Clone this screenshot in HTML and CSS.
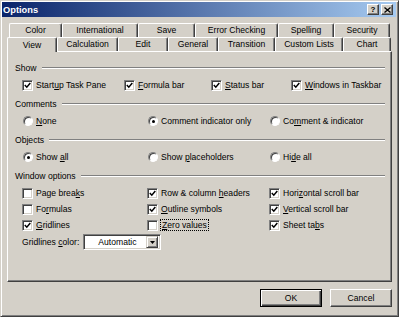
FILE: index.html
```html
<!DOCTYPE html>
<html lang="en">
<head>
  <meta charset="UTF-8">
  <title>Options</title>
  <link rel="stylesheet" href="styles.css">
</head>
<body>
  <div class="dialog">
    <div class="titlebar">
      <span class="title">Options</span>
      <span class="capbtn">?</span>
      <span class="capbtn close">
        <svg width="7" height="6" viewBox="0 0 7 6"><path d="M0.5 0.5 L6.5 5.5 M6.5 0.5 L0.5 5.5" stroke="#000" stroke-width="1.3"/></svg>
      </span>
    </div>

    <div class="content">
      <div class="tabrow back">
        <div class="tab t-color">Color</div>
        <div class="tab t-intl">International</div>
        <div class="tab t-save">Save</div>
        <div class="tab t-error">Error Checking</div>
        <div class="tab t-spell">Spelling</div>
        <div class="tab t-sec">Security</div>
      </div>
      <div class="tabrow front">
        <div class="tab t-view active">View</div>
        <div class="tab t-calc">Calculation</div>
        <div class="tab t-edit">Edit</div>
        <div class="tab t-gen">General</div>
        <div class="tab t-trans">Transition</div>
        <div class="tab t-custom">Custom Lists</div>
        <div class="tab t-chart">Chart</div>
      </div>

      <div class="panel">
        <div class="grp">Show</div>
        <div class="row show-row">
          <label class="item"><span class="cb checked"><svg width="7" height="7" viewBox="0 0 7 7"><polyline points="0.8,3 2.8,5.2 6.3,1" fill="none" stroke="#000" stroke-width="1.5"/></svg></span><span>Start<u>u</u>p Task Pane</span></label>
          <label class="item"><span class="cb checked"><svg width="7" height="7" viewBox="0 0 7 7"><polyline points="0.8,3 2.8,5.2 6.3,1" fill="none" stroke="#000" stroke-width="1.5"/></svg></span><span><u>F</u>ormula bar</span></label>
          <label class="item"><span class="cb checked"><svg width="7" height="7" viewBox="0 0 7 7"><polyline points="0.8,3 2.8,5.2 6.3,1" fill="none" stroke="#000" stroke-width="1.5"/></svg></span><span><u>S</u>tatus bar</span></label>
          <label class="item"><span class="cb checked"><svg width="7" height="7" viewBox="0 0 7 7"><polyline points="0.8,3 2.8,5.2 6.3,1" fill="none" stroke="#000" stroke-width="1.5"/></svg></span><span><u>W</u>indows in Taskbar</span></label>
        </div>

        <div class="grp">Comments</div>
        <div class="row cols3">
          <label class="item"><span class="rb"></span><span><u>N</u>one</span></label>
          <label class="item"><span class="rb on"></span><span>Comment indicator only</span></label>
          <label class="item"><span class="rb"></span><span>Co<u>m</u>ment &amp; indicator</span></label>
        </div>

        <div class="grp">Objects</div>
        <div class="row cols3">
          <label class="item"><span class="rb on"></span><span>Show <u>a</u>ll</span></label>
          <label class="item"><span class="rb"></span><span>Show <u>p</u>laceholders</span></label>
          <label class="item"><span class="rb"></span><span>Hi<u>d</u>e all</span></label>
        </div>

        <div class="grp">Window options</div>
        <div class="row cols3">
          <label class="item"><span class="cb"></span><span>Page brea<u>k</u>s</span></label>
          <label class="item"><span class="cb checked"><svg width="7" height="7" viewBox="0 0 7 7"><polyline points="0.8,3 2.8,5.2 6.3,1" fill="none" stroke="#000" stroke-width="1.5"/></svg></span><span>Row &amp; column <u>h</u>eaders</span></label>
          <label class="item"><span class="cb checked"><svg width="7" height="7" viewBox="0 0 7 7"><polyline points="0.8,3 2.8,5.2 6.3,1" fill="none" stroke="#000" stroke-width="1.5"/></svg></span><span>Hori<u>z</u>ontal scroll bar</span></label>
        </div>
        <div class="row cols3">
          <label class="item"><span class="cb"></span><span>Fo<u>r</u>mulas</span></label>
          <label class="item"><span class="cb checked"><svg width="7" height="7" viewBox="0 0 7 7"><polyline points="0.8,3 2.8,5.2 6.3,1" fill="none" stroke="#000" stroke-width="1.5"/></svg></span><span><u>O</u>utline symbols</span></label>
          <label class="item"><span class="cb checked"><svg width="7" height="7" viewBox="0 0 7 7"><polyline points="0.8,3 2.8,5.2 6.3,1" fill="none" stroke="#000" stroke-width="1.5"/></svg></span><span><u>V</u>ertical scroll bar</span></label>
        </div>
        <div class="row cols3">
          <label class="item"><span class="cb checked"><svg width="7" height="7" viewBox="0 0 7 7"><polyline points="0.8,3 2.8,5.2 6.3,1" fill="none" stroke="#000" stroke-width="1.5"/></svg></span><span><u>G</u>ridlines</span></label>
          <label class="item"><span class="cb"></span><span class="focus"><u>Z</u>ero values</span></label>
          <label class="item"><span class="cb checked"><svg width="7" height="7" viewBox="0 0 7 7"><polyline points="0.8,3 2.8,5.2 6.3,1" fill="none" stroke="#000" stroke-width="1.5"/></svg></span><span>Sheet ta<u>b</u>s</span></label>
        </div>
        <div class="row color-row">
          <span class="color-label">Gridlines <u>c</u>olor:</span>
          <div class="combo">
            <span class="combo-val">Automatic</span>
            <span class="combo-btn"><svg width="5" height="3" viewBox="0 0 5 3"><path d="M0 0 H5 L2.5 3 Z" fill="#000"/></svg></span>
          </div>
        </div>
      </div>

      <div class="buttons">
        <button class="btn default">OK</button>
        <button class="btn">Cancel</button>
      </div>
    </div>
  </div>
</body>
</html>
```

FILE: styles.css
```css
body {
  margin: 0;
  background: #fff;
  font-family: "Liberation Sans", Arial, sans-serif;
  font-size: 8.6px;
  color: #000;
}

.dialog {
  width: 399px;
  height: 317px;
  box-sizing: border-box;
  background: #d4d0c8;
  border: 1px solid;
  border-color: #d4d0c8 #404040 #404040 #d4d0c8;
  box-shadow: inset 1px 1px #fff, inset -1px -1px #808080;
  padding: 1px 2px 0 1px;
}

.titlebar {
  height: 15px;
  display: flex;
  align-items: center;
  gap: 2px;
  padding: 0 3px 0 1px;
  background: linear-gradient(to right, #0a246a, #a6caf0);
}

.title {
  flex: 1;
  color: #fff;
  font-weight: bold;
  font-size: 9.3px;
}

.capbtn {
  width: 12px;
  height: 11px;
  box-sizing: border-box;
  display: flex;
  align-items: center;
  justify-content: center;
  background: #d4d0c8;
  border: 1px solid;
  border-color: #fff #404040 #404040 #fff;
  box-shadow: inset -1px -1px #808080;
  font-weight: bold;
  font-size: 8px;
  line-height: 1;
}

.content {
  padding: 6px 4px 0 5px;
}

/* tabs */
.tabrow {
  display: flex;
  height: 14px;
}

.tabrow.back {
  margin-left: 2px;
}

.tab {
  box-sizing: border-box;
  height: 14px;
  border-top: 1px solid #fff;
  border-left: 1px solid #fff;
  border-right: 1px solid #404040;
  box-shadow: inset -1px 0 #808080;
  border-radius: 2px 2px 0 0;
  text-align: center;
  line-height: 13px;
}

.tab.active {
  position: relative;
  z-index: 1;
  height: 15px;
  background: #d4d0c8;
  line-height: 15px;
}

.t-color { width: 53px; }
.t-intl { width: 76px; }
.t-save { width: 57px; }
.t-error { width: 83px; }
.t-spell { width: 56px; }
.t-sec { width: 56px; }

.t-view { width: 50px; }
.t-calc { width: 61px; }
.t-edit { width: 50px; }
.t-gen { width: 50px; }
.t-trans { width: 57px; }
.t-custom { width: 68px; }
.t-chart { width: 48px; }

/* panel */
.panel {
  height: 231px;
  box-sizing: border-box;
  border: 1px solid;
  border-color: #fff #404040 #404040 #fff;
  box-shadow: inset -1px -1px #808080;
  padding: 9px 6px 0 7px;
}

.grp {
  display: flex;
  align-items: center;
  height: 14px;
}

.grp::after {
  content: "";
  flex: 1;
  margin-left: 5px;
  border-top: 1px solid #808080;
  border-bottom: 1px solid #fff;
}

.row {
  display: grid;
  align-items: center;
  height: 16px;
  margin-left: 7px;
}

.grp + .row { margin-top: 2px; }
.row + .grp { margin-top: 4px; }

.show-row { grid-template-columns: 102px 87px 80px 1fr; }
.cols3 { grid-template-columns: 125px 122px 1fr; }

.item {
  display: flex;
  align-items: center;
  white-space: nowrap;
}

.cb {
  width: 11px;
  height: 11px;
  box-sizing: border-box;
  margin-right: 3px;
  display: flex;
  align-items: center;
  justify-content: center;
  background: #fff;
  border: 1px solid;
  border-color: #808080 #fff #fff #808080;
  box-shadow: inset 1px 1px #404040, inset -1px -1px #d4d0c8;
}

.rb {
  width: 10px;
  height: 10px;
  box-sizing: border-box;
  margin: 0 3px 0 1px;
  border-radius: 50%;
  background: #fff;
  border: 1px solid;
  border-color: #808080 #fff #fff #808080;
  box-shadow: inset 1px 1px #404040;
  display: flex;
  align-items: center;
  justify-content: center;
}

.rb.on::after {
  content: "";
  width: 3px;
  height: 3px;
  border-radius: 50%;
  background: #000;
}

.focus {
  outline: 1px dotted #000;
  outline-offset: 0;
  padding: 0 1px;
}

.color-row {
  display: flex;
  height: 18px;
}

.color-label {
  margin-right: 4px;
}

.combo {
  width: 78px;
  height: 16px;
  box-sizing: border-box;
  display: flex;
  align-items: center;
  padding: 2px;
  background: #fff;
  border: 1px solid;
  border-color: #808080 #fff #fff #808080;
  box-shadow: inset 1px 1px #404040, inset -1px -1px #d4d0c8;
}

.combo-val {
  flex: 1;
  padding-left: 12px;
}

.combo-btn {
  width: 12px;
  height: 12px;
  box-sizing: border-box;
  display: flex;
  align-items: center;
  justify-content: center;
  background: #d4d0c8;
  border: 1px solid;
  border-color: #d4d0c8 #404040 #404040 #d4d0c8;
  box-shadow: inset 1px 1px #fff, inset -1px -1px #808080;
}

/* buttons */
.buttons {
  display: flex;
  justify-content: flex-end;
  gap: 8px;
  margin-top: 7px;
}

.btn {
  width: 62px;
  height: 18px;
  box-sizing: border-box;
  padding: 0;
  font-family: inherit;
  font-size: 8.6px;
  color: #000;
  background: #d4d0c8;
  border: 1px solid;
  border-color: #fff #404040 #404040 #fff;
  box-shadow: inset -1px -1px #808080;
}

.btn.default {
  border-color: #000;
  box-shadow: inset 1px 1px #fff, inset -1px -1px #404040, inset -2px -2px #808080;
}
```
